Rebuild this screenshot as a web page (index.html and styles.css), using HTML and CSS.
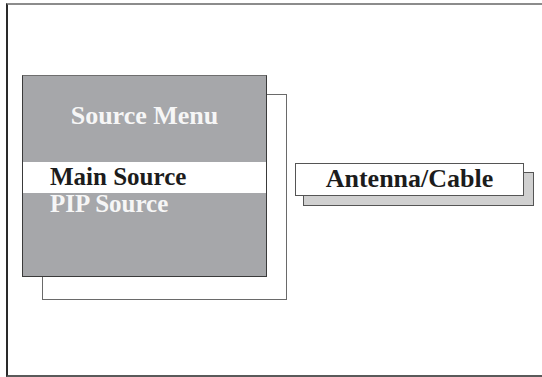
FILE: index.html
```html
<!DOCTYPE html>
<html>
<head>
<meta charset="utf-8">
<link rel="stylesheet" href="styles.css">
</head>
<body>
<div class="frame">
  <div class="content">
    <div class="menu-stack">
      <div class="menu-back"></div>
      <div class="menu">
        <div class="menu-title">Source Menu</div>
        <div class="menu-item selected">Main Source</div>
        <div class="menu-item pip">PIP Source</div>
      </div>
    </div>
    <div class="value-stack">
      <div class="value-shadow"></div>
      <div class="value">Antenna/Cable</div>
    </div>
  </div>
</div>
</body>
</html>
```

FILE: styles.css
```css
html, body {
  margin: 0;
  padding: 0;
  background: #ffffff;
}
body {
  width: 542px;
  height: 377px;
  overflow: hidden;
  font-family: "Liberation Serif", "Times New Roman", serif;
  font-weight: bold;
}
.frame {
  box-sizing: border-box;
  margin: 3px 0 0 6px;
  height: 374px;
  border-left: 2px solid #2a2a2a;
  border-top: 2px solid #8c8c8c;
  border-bottom: 2px solid #5a5a5a;
}
.content {
  display: flex;
  align-items: flex-start;
  padding: 70px 0 0 14px;
}
.menu-stack {
  display: grid;
}
.menu-back,
.menu {
  grid-area: 1 / 1;
}
.menu-back {
  box-sizing: border-box;
  margin: 19px 0 0 20px;
  width: 245px;
  height: 206px;
  border: 1px solid #6a6a6a;
}
.menu {
  box-sizing: border-box;
  width: 245px;
  height: 202px;
  margin-right: 20px;
  background: #a6a7aa;
  border: 1px solid #3a3a3a;
  border-top-color: #6e6e6e;
}
.menu-title {
  font-size: 26px;
  line-height: 31px;
  padding-top: 24px;
  color: #f6f6f6;
  text-align: center;
}
.menu-item {
  font-size: 25px;
  padding-left: 27px;
}
.selected {
  margin-top: 31px;
  background: #ffffff;
  color: #1c1c1c;
  line-height: 29px;
  padding-bottom: 2px;
}
.pip {
  color: #f6f6f6;
  line-height: 22px;
}
.value-stack {
  display: grid;
  margin: 88px 0 0 8px;
}
.value-shadow,
.value {
  grid-area: 1 / 1;
}
.value-shadow {
  box-sizing: border-box;
  margin: 9px 0 0 8px;
  width: 231px;
  height: 34px;
  background: #d0d0d0;
  border: 1px solid #555555;
}
.value {
  box-sizing: border-box;
  width: 229px;
  height: 33px;
  margin: 0 10px 10px 0;
  background: #ffffff;
  border: 1px solid #555555;
  font-size: 26px;
  line-height: 29px;
  padding-bottom: 2px;
  text-align: center;
  color: #1c1c1c;
}
```
